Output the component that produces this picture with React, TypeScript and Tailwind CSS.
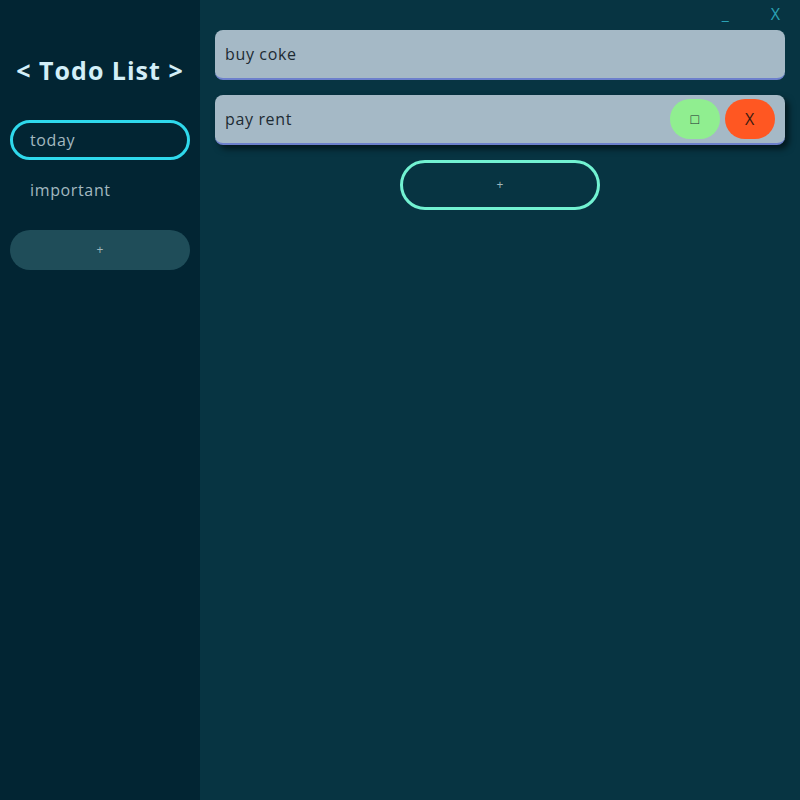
const font = { fontFamily: '"Open Sans", "Noto Sans", sans-serif' };

function SideItem({ label, active }: { label: string; active?: boolean }) {
  return (
    <div
      className={
        "h-10 flex items-center px-[17px] rounded-full text-base tracking-[0.04em] text-[#a3b9c0] " +
        (active ? "border-[3px] border-[#2fd9ec]" : "border-[3px] border-transparent")
      }
    >
      {label}
    </div>
  );
}

function Todo({ text, hovered }: { text: string; hovered?: boolean }) {
  return (
    <div
      className={
        "h-[50px] flex items-center pl-[10px] pr-[10px] rounded-lg bg-[#a5b9c6] border-b-2 border-[#6d80cc] text-[#1d2b33] text-base tracking-[0.04em] " +
        (hovered ? "shadow-[4px_4px_6px_rgba(0,0,0,0.55)]" : "")
      }
    >
      <span className="flex-1">{text}</span>
      {hovered && (
        <div className="flex gap-[5px]">
          <button className="w-[50px] h-10 rounded-full bg-[#90ee90] text-[#1d2b33] text-sm">□</button>
          <button className="w-[50px] h-10 rounded-full bg-[#ff5722] text-[#3a1a10] text-base">X</button>
        </div>
      )}
    </div>
  );
}

export default function App() {
  return (
    <div className="flex w-[800px] h-[800px]" style={font}>
      {/* Sidebar */}
      <div className="w-[200px] bg-[#022533] px-[10px] flex flex-col">
        <h1 className="mt-[51px] leading-[38px] text-center text-[25px] font-bold tracking-[0.04em] text-[#d3eff8]">
          &lt; Todo List &gt;
        </h1>
        <div className="mt-[31px] flex flex-col gap-[10px]">
          <SideItem label="today" active />
          <SideItem label="important" />
        </div>
        <button className="mt-5 h-10 rounded-full bg-[#1f4d59] text-[#9fb7bd] text-xs">+</button>
      </div>

      {/* Main */}
      <div className="flex-1 bg-[#073442] px-[15px] flex flex-col">
        <div className="h-[30px] flex justify-end items-start gap-[42px] pr-[5px] text-[#2ba2b4]">
          <span className="text-base mt-[2px]">_</span>
          <span className="text-base mt-[2px]">X</span>
        </div>
        <div className="flex flex-col gap-[15px]">
          <Todo text="buy coke" />
          <Todo text="pay rent" hovered />
        </div>
        <button className="mt-[15px] self-center w-[200px] h-[50px] rounded-full border-[3px] border-[#72f2d2] text-[#9fb7bd] text-xs">
          +
        </button>
      </div>
    </div>
  );
}
